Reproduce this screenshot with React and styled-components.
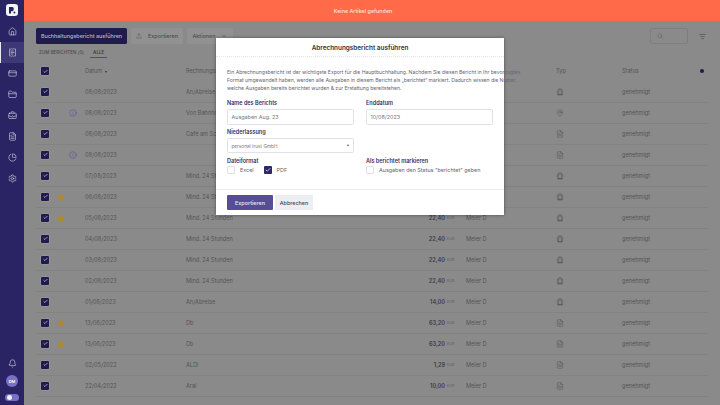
import React from 'react'
import styled, { createGlobalStyle } from 'styled-components'
import {
  House, ReceiptText, CreditCard, FolderClosed, BriefcaseBusiness, FileText, ChartPie, Settings,
  Bell, Upload, Search, ListFilter, Info, TriangleAlert, Check, Luggage, MapPin, ChevronDown,
} from 'lucide-react'

const GlobalStyle = createGlobalStyle`
  html, body { margin: 0; padding: 0; background: #8a8a8a; }
  * { box-sizing: border-box; }
  body { font-family: Inter, "Liberation Sans", sans-serif; overflow: hidden; }
`

const Page = styled.div`
  position: relative;
  display: flex;
  width: 720px;
  height: 405px;
  overflow: hidden;
  background: #8a8a8a;
`

const Sidebar = styled.nav`
  display: flex;
  flex-direction: column;
  align-items: stretch;
  flex: 0 0 24px;
  background: #2a2464;
`

const Logo = styled.div`
  display: flex;
  align-items: center;
  justify-content: center;
  width: 12px;
  height: 12px;
  margin: 4px 6px 5px;
  border-radius: 3px;
  background: #f4f4f8;
`

const NavItem = styled.div`
  display: flex;
  align-items: center;
  justify-content: center;
  height: 21px;
  color: #d9d8e6;
  background: ${p => (p.$active ? '#3d3876' : 'transparent')};
  border-left: ${p => (p.$active ? '1.5px solid #e8e8f0' : 'none')};
`

const SidebarBottom = styled.div`
  display: flex;
  flex-direction: column;
  align-items: center;
  margin-top: auto;
  padding-bottom: 4px;
  color: #d9d8e6;
  gap: 7px;
`

const Avatar = styled.div`
  display: flex;
  align-items: center;
  justify-content: center;
  width: 12px;
  height: 12px;
  border-radius: 50%;
  background: #7a70c8;
  color: #fff;
  font-size: 4px;
  font-weight: 600;
`

const Toggle = styled.div`
  display: flex;
  align-items: center;
  width: 14px;
  height: 7px;
  padding: 1px 2px;
  border-radius: 4px;
  background: #7a70c8;
  &::before {
    content: '';
    width: 5px;
    height: 5px;
    border-radius: 50%;
    background: #f0f0f5;
  }
`

const Main = styled.main`
  flex: 1;
  display: flex;
  flex-direction: column;
  min-width: 0;
`

const Banner = styled.div`
  display: flex;
  align-items: center;
  justify-content: center;
  flex: 0 0 21px;
  background: #ff6a48;
  color: #ffe3db;
  font-size: 5.4px;
  font-weight: 500;
  padding-right: 18px;
`

const Content = styled.div`
  display: flex;
  flex-direction: column;
  padding: 7px 12px 0;
`

const Toolbar = styled.div`
  display: flex;
  align-items: center;
  height: 16px;
  gap: 4px;
`

const Button = styled.div`
  display: flex;
  align-items: center;
  justify-content: center;
  height: 16px;
  width: ${p => p.$w}px;
  gap: 6px;
  border-radius: 1.5px;
  font-size: 5.4px;
  font-weight: 500;
  background: ${p => (p.$primary ? '#1f1b4c' : '#919191')};
  color: ${p => (p.$primary ? '#b9b8cc' : '#4e4e4e')};
`

const SearchBox = styled.div`
  display: flex;
  align-items: center;
  width: 38px;
  height: 16px;
  margin-left: auto;
  padding-left: 6px;
  border: 1px solid #7e7e7e;
  border-radius: 2px;
  color: #5a5a5a;
`

const FilterButton = styled.div`
  display: flex;
  margin: 0 2px 0 7px;
  color: #444;
`

const Tabs = styled.div`
  display: flex;
  align-items: center;
  height: 17px;
  padding: 0 3px;
  gap: 6px;
`

const Tab = styled.div`
  font-size: 4.4px;
  font-weight: 500;
  letter-spacing: 0.1px;
  padding: 2px ${p => (p.$active ? '3px' : '0')};
  color: ${p => (p.$active ? '#3a3a44' : '#4a4a4a')};
  font-weight: ${p => (p.$active ? 600 : 500)};
  border-bottom: ${p => (p.$active ? '0.7px solid #4f4a9a' : '0.7px solid transparent')};
`

const Row = styled.div`
  display: grid;
  grid-template-columns: 20px 10px 19px 101px 204px 55px 21px 90px 66px 78px 1fr;
  align-items: center;
  flex: 0 0 21px;
  height: 21px;
  width: 672px;
  font-size: 5.6px;
  color: #555;
  border-bottom: ${p => (p.$head ? 'none' : '0.7px solid #828282')};
  margin-top: ${p => (p.$head ? '-0.5px' : '0')};
`

const CheckCell = styled.div`
  padding-left: 5px;
`

const CheckBox = styled.div`
  display: flex;
  align-items: center;
  justify-content: center;
  width: ${p => p.$size || 8}px;
  height: ${p => p.$size || 8}px;
  border-radius: 1px;
  background: ${p => (p.$on ? (p.$bright ? '#2d2768' : '#1f1b4c') : '#fff')};
  border: ${p => (p.$on ? 'none' : '0.7px solid #dfe0ea')};
  box-shadow: ${p => (p.$on && !p.$bright ? '0 0 0 0.6px #9d9da5' : 'none')};
  color: #e8e8f0;
`

const WarnIcon = styled.div`
  display: flex;
  justify-content: center;
  color: #ad8a30;
  svg { fill: #ad8a30; }
`

const InfoIcon = styled.div`
  display: flex;
  padding-left: 3px;
  color: #4f4aa6;
`

const Vendor = styled.div`
  white-space: nowrap;
`

const Amount = styled.div`
  text-align: right;
  font-weight: 600;
  color: #3a3848;
`

const Currency = styled.div`
  padding-left: 2px;
  font-size: 3.8px;
  color: #5e5e5e;
`

const TypeIcon = styled.div`
  display: flex;
  color: #505050;
`

const SortHead = styled.div`
  display: flex;
  align-items: center;
  gap: 3px;
  &::after {
    content: '';
    border: 1.5px solid transparent;
    border-top: 2px solid #333;
    margin-top: 2px;
  }
`

const Dot = styled.div`
  width: 4px;
  height: 4px;
  border-radius: 50%;
  background: #1f1b4c;
`

const Modal = styled.section`
  position: absolute;
  left: 216px;
  top: 38px;
  width: 288px;
  height: 177px;
  display: flex;
  flex-direction: column;
  background: #fff;
  box-shadow: 0 0 3px rgba(0, 0, 0, 0.45);
`

const ModalHeader = styled.header`
  display: flex;
  align-items: center;
  justify-content: center;
  flex: 0 0 19px;
  border-bottom: 0.7px dotted #e6e6ec;
  font-size: 6.4px;
  font-weight: 600;
  color: #33333b;
  padding-top: 1px;
`

const ModalBody = styled.div`
  flex: 1;
  display: flex;
  flex-direction: column;
  padding: 11px 11px 0;
`

const Intro = styled.p`
  margin: 0 0 7px;
  font-size: 5.05px;
  line-height: 8px;
  color: #666672;
  white-space: nowrap;
`

const FormGrid = styled.div`
  display: grid;
  grid-template-columns: 127px 127px;
  column-gap: 12px;
`

const Field = styled.div`
  display: flex;
  flex-direction: column;
  height: ${p => p.$h || 29}px;
`

const Label = styled.label`
  font-size: 5.5px;
  font-weight: 600;
  color: #34305f;
  line-height: 8px;
  margin-bottom: ${p => p.$mb ?? 2}px;
`

const Input = styled.div`
  display: flex;
  align-items: center;
  justify-content: space-between;
  height: ${p => p.$h || 16}px;
  padding: 0 3.5px;
  border: 0.7px solid #dfe1ea;
  border-radius: 1.5px;
  font-size: ${p => p.$fs || 5.4}px;
  color: #77777f;
`

const Options = styled.div`
  display: flex;
  align-items: center;
  gap: 5px;
  font-size: 5.4px;
  color: #66666e;
`

const OptionGap = styled.span`
  margin-right: 0;
`

const ModalFooter = styled.footer`
  display: flex;
  align-items: center;
  gap: 2px;
  flex: 0 0 26px;
  padding: 0 11px;
  border-top: 0.7px solid #e8e8ee;
`

const FooterButton = styled.div`
  display: flex;
  align-items: center;
  justify-content: center;
  height: 15px;
  width: ${p => p.$w}px;
  border-radius: 1px;
  font-size: 5.4px;
  font-weight: 500;
  background: ${p => (p.$primary ? '#574d96' : '#eceef3')};
  color: ${p => (p.$primary ? '#ecebf5' : '#44444e')};
`

const navIcons = [House, ReceiptText, CreditCard, FolderClosed, BriefcaseBusiness, FileText, ChartPie, Settings]

const rows = [
  { date: '08/08/2023', vendor: 'An/Abreise', amount: '22,40', type: 'bag' },
  { date: '08/08/2023', vendor: 'Von Bahnhof', amount: '22,40', type: 'pin', info: true },
  { date: '08/08/2023', vendor: 'Café am Schloss', amount: '22,40', type: 'doc' },
  { date: '08/08/2023', vendor: '', amount: '22,40', type: 'doc', info: true },
  { date: '07/08/2023', vendor: 'Mind. 24 Stunden', amount: '22,40', type: 'bag' },
  { date: '06/08/2023', vendor: 'Mind. 24 Stunden', amount: '22,40', type: 'bag', warn: true },
  { date: '05/08/2023', vendor: 'Mind. 24 Stunden', amount: '22,40', type: 'bag', warn: true },
  { date: '04/08/2023', vendor: 'Mind. 24 Stunden', amount: '22,40', type: 'bag' },
  { date: '03/08/2023', vendor: 'Mind. 24 Stunden', amount: '22,40', type: 'bag' },
  { date: '02/08/2023', vendor: 'Mind. 24 Stunden', amount: '22,40', type: 'bag' },
  { date: '01/08/2023', vendor: 'An/Abreise', amount: '14,00', type: 'bag' },
  { date: '13/06/2023', vendor: 'Db', amount: '63,20', type: 'doc', warn: true },
  { date: '13/06/2023', vendor: 'Db', amount: '63,20', type: 'doc', warn: true },
  { date: '02/05/2022', vendor: 'ALDI', amount: '1,29', type: 'doc' },
  { date: '22/04/2022', vendor: 'Aral', amount: '10,00', type: 'doc' },
]

const typeIcons = { bag: Luggage, pin: MapPin, doc: FileText }

export default function App() {
  return (
    <Page>
      <GlobalStyle />
      <Sidebar>
        <Logo>
          <svg width="8" height="8" viewBox="0 0 8 8">
            <path d="M1 1h3.6a2.4 2.4 0 0 1 0 4.2H3V7.4H1z" fill="#2a2464" />
            <circle cx="6.4" cy="6.4" r="1" fill="#2a2464" />
          </svg>
        </Logo>
        {navIcons.map((Icon, i) => (
          <NavItem key={i} $active={i === 1}>
            <Icon size={9} strokeWidth={1.6} />
          </NavItem>
        ))}
        <SidebarBottom>
          <Bell size={9} strokeWidth={1.6} />
          <Avatar>DM</Avatar>
          <Toggle />
        </SidebarBottom>
      </Sidebar>

      <Main>
        <Banner>Keine Artikel gefunden</Banner>
        <Content>
          <Toolbar>
            <Button $primary $w={91}>Buchhaltungsbericht ausführen</Button>
            <Button $w={52}>
              <Upload size={6} strokeWidth={1.6} />
              Exportieren
            </Button>
            <Button $w={46}>
              Aktionen
              <ChevronDown size={6} strokeWidth={2.4} />
            </Button>
            <SearchBox><Search size={6} strokeWidth={1.6} /></SearchBox>
            <FilterButton><ListFilter size={7} strokeWidth={1.8} /></FilterButton>
          </Toolbar>
          <Tabs>
            <Tab>ZUM BERICHTEN (0)</Tab>
            <Tab $active>ALLE</Tab>
          </Tabs>
          <Row $head>
            <CheckCell><CheckBox $on><Check size={5} strokeWidth={3} /></CheckBox></CheckCell>
            <span />
            <span />
            <SortHead>Datum</SortHead>
            <Vendor>Rechnungsstelle</Vendor>
            <span />
            <span />
            <span />
            <div>Typ</div>
            <div>Status</div>
            <Dot />
          </Row>
          {rows.map((r, i) => {
            const TypeGlyph = typeIcons[r.type]
            return (
              <Row key={i}>
                <CheckCell><CheckBox $on><Check size={5} strokeWidth={3} /></CheckBox></CheckCell>
                <WarnIcon>{r.warn && <TriangleAlert size={8} strokeWidth={1.4} />}</WarnIcon>
                <InfoIcon>{r.info && <Info size={8} strokeWidth={1.4} />}</InfoIcon>
                <div>{r.date}</div>
                <Vendor>{r.vendor}</Vendor>
                <Amount>{r.amount}</Amount>
                <Currency>EUR</Currency>
                <div>Meier D</div>
                <TypeIcon><TypeGlyph size={8} strokeWidth={1.4} /></TypeIcon>
                <div>genehmigt</div>
                <span />
              </Row>
            )
          })}
        </Content>
      </Main>

      <Modal>
        <ModalHeader>Abrechnungsbericht ausführen</ModalHeader>
        <ModalBody>
          <Intro>
            Ein Abrechnungsbericht ist der wichtigste Export für die Hauptbuchhaltung. Nachdem Sie diesen Bericht in Ihr bevorzugtes<br />
            Format umgewandelt haben, werden alle Ausgaben in diesem Bericht als „berichtet“ markiert. Dadurch wissen die Nutzer,<br />
            welche Ausgaben bereits berichtet wurden &amp; zur Erstattung bereitstehen.
          </Intro>
          <FormGrid>
            <Field>
              <Label>Name des Berichts</Label>
              <Input>Ausgaben Aug. 23</Input>
            </Field>
            <Field>
              <Label>Enddatum</Label>
              <Input>10/08/2023</Input>
            </Field>
            <Field>
              <Label>Niederlassung</Label>
              <Input $h={15} $fs={4.7}>
                personal trust GmbH
                <svg width="4" height="3" viewBox="0 0 4 3"><path d="M0.8 0.8h2.4L2 2.4z" fill="#555" /></svg>
              </Input>
            </Field>
            <span />
            <Field $h={20}>
              <Label $mb={1}>Dateiformat</Label>
              <Options>
                <CheckBox $size={8} />
                <span>Excel</span>
                <OptionGap />
                <CheckBox $size={8} $on $bright><Check size={6} strokeWidth={3} /></CheckBox>
                <span>PDF</span>
              </Options>
            </Field>
            <Field $h={20}>
              <Label $mb={1}>Als berichtet markieren</Label>
              <Options>
                <CheckBox $size={8} />
                <span>Ausgaben den Status "berichtet" geben</span>
              </Options>
            </Field>
          </FormGrid>
        </ModalBody>
        <ModalFooter>
          <FooterButton $primary $w={46}>Exportieren</FooterButton>
          <FooterButton $w={38}>Abbrechen</FooterButton>
        </ModalFooter>
      </Modal>
    </Page>
  )
}
